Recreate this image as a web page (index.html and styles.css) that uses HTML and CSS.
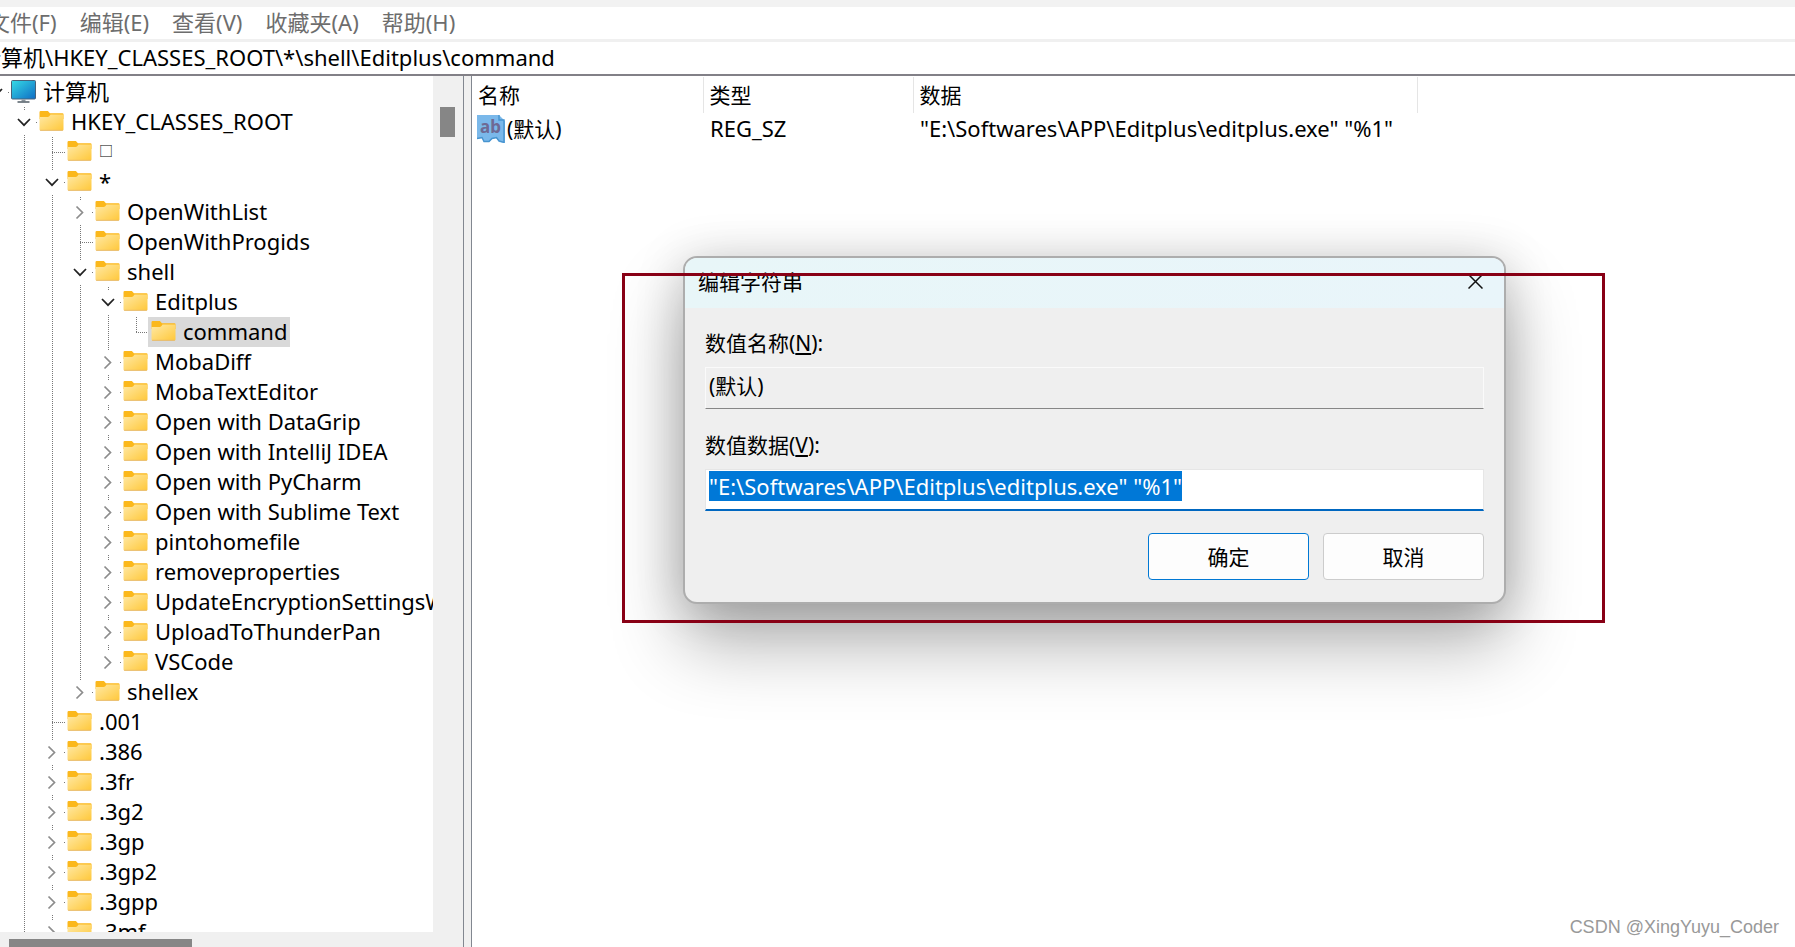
FILE: index.html
```html
<!DOCTYPE html>
<html lang="zh-CN">
<head>
    <meta charset="UTF-8">
    <title>注册表编辑器</title>
    <meta name="viewport" content="width=device-width, initial-scale=1.0">
    <link rel="stylesheet" href="styles.css">
</head>
<body>

    <!-- Shared icons -->
    <svg class="icon-defs" aria-hidden="true">
        <defs>
            <linearGradient id="folderFill" x1="0" y1="0" x2="1" y2="1">
                <stop offset="0" stop-color="#ffe9a6"/>
                <stop offset="1" stop-color="#ffc83a"/>
            </linearGradient>
            <linearGradient id="screenFill" x1="0" y1="0" x2="1" y2="1">
                <stop offset="0" stop-color="#35dbe6"/>
                <stop offset="1" stop-color="#0f6cc4"/>
            </linearGradient>
        </defs>
        <symbol id="folder" viewBox="0 0 24 20">
            <path d="M0 1.2Q0 0 1.2 0H8.4L10.4 2.2H23Q24 2.2 24 3.2V8H0Z" fill="#fbb81c"/>
            <path d="M0 6H8.2Q9 6 9.8 5.2L11 3.6H24V18.4Q24 19.4 23 19.4H1Q0 19.4 0 18.4Z" fill="url(#folderFill)"/>
            <path d="M.6 19.3H23.4" stroke="#e8b96a" stroke-width="1"/>
        </symbol>
        <symbol id="computer" viewBox="0 0 25 23">
            <rect x=".5" y=".5" width="24" height="18.5" rx="1" fill="url(#screenFill)" stroke="#48627a"/>
            <path d="M10.5 19.5H14.5V21.5H10.5Z" fill="#8c959d"/>
            <path d="M6.5 22H18.5" stroke="#5c6770" stroke-width="1.6"/>
        </symbol>
        <symbol id="open" viewBox="0 0 24 24">
            <path d="M6 9L12 15.2L18 9" fill="none" stroke="#222" stroke-width="1.7"/>
        </symbol>
        <symbol id="closed" viewBox="0 0 24 24">
            <path d="M8.500 6.500L14.500 12.500L8.500 18.500" fill="none" stroke="#8c8c8c" stroke-width="1.7"/>
        </symbol>
    </svg>

    <div class="window">
        <nav class="menu">
            <button type="button">文件(F)</button>
            <button type="button">编辑(E)</button>
            <button type="button">查看(V)</button>
            <button type="button">收藏夹(A)</button>
            <button type="button">帮助(H)</button>
        </nav>

        <div class="address">
            <input type="text" aria-label="地址" value="计算机\HKEY_CLASSES_ROOT\*\shell\Editplus\command">
        </div>

        <div class="panes">
            <!-- Key tree -->
            <div class="tree-pane">
                <div class="tree-view">
                    <ul class="tree" id="tree"></ul>
                </div>
                <div class="scroll-v"><div class="thumb"></div></div>
                <div class="scroll-h"><div class="thumb"></div></div>
            </div>

            <div class="splitter"></div>

            <!-- Values of the selected key -->
            <div class="value-pane">
                <table class="values">
                    <thead>
                        <tr>
                            <th class="col-name">名称</th>
                            <th class="col-type">类型</th>
                            <th class="col-data">数据</th>
                            <th></th>
                        </tr>
                    </thead>
                    <tbody>
                        <tr>
                            <td>
                                <div class="value-name">
                                    <svg width="28" height="28" viewBox="0 0 28 28" aria-hidden="true">
                                        <path d="M0 0H22L28 6V28L22 27L19 23L15 24L12 27H7L5 23L0 24Z" fill="#7ab8ea"/>
                                        <path d="M22 0V5H27V27.400L22 26L19.500 22.500L15 23.500L12 26.500H7L5 22.500L0 23.500" fill="none" stroke="#4794cf" stroke-width="1.400"/>
                                        <text x="3" y="18" class="ab">ab</text>
                                    </svg>
                                    (默认)
                                </div>
                            </td>
                            <td>REG_SZ</td>
                            <td>"E:\Softwares\APP\Editplus\editplus.exe" "%1"</td>
                            <td></td>
                        </tr>
                    </tbody>
                </table>
            </div>
        </div>
    </div>

    <!-- Edit string dialog -->
    <form class="dialog" role="dialog" aria-labelledby="dialogTitle">
        <div class="dialog-title">
            <span id="dialogTitle">编辑字符串</span>
            <button type="button" class="close" aria-label="关闭">
                <svg width="15" height="15" viewBox="0 0 15 15"><path d="M.5 .5L14.500 14.500M14.500 .5L.5 14.500" stroke="#111" stroke-width="1.500"/></svg>
            </button>
        </div>
        <div class="dialog-body">
            <label for="valueName">数值名称(<u>N</u>):</label>
            <input type="text" id="valueName" class="readonly" value="(默认)" readonly>
            <label for="valueData">数值数据(<u>V</u>):</label>
            <input type="text" id="valueData" class="data" spellcheck="false" value='"E:\Softwares\APP\Editplus\editplus.exe" "%1"'>
            <div class="dialog-buttons">
                <button type="button" class="default">确定</button>
                <button type="button">取消</button>
            </div>
        </div>
    </form>

    <div class="marker"></div>
    <div class="watermark">CSDN @XingYuyu_Coder</div>

    <script src="script.js"></script>
</body>
</html>
```

FILE: styles.css
```css
* {
    box-sizing: border-box;
}
body {
    margin: 0;
    position: relative;
    overflow: hidden;
    font-family: "Noto Sans", "Noto Sans CJK SC", sans-serif;
    font-size: 21px;
    line-height: 30px;
    color: #000000;
    background-color: #ffffff;
}
button, input {
    font: inherit;
    color: inherit;
    border: none;
    background: none;
    padding: 0;
    outline: none;
}
.icon-defs {
    position: absolute;
    width: 0;
    height: 0;
}
.window {
    display: flex;
    flex-direction: column;
    height: 100vh;
}

/* Menu and address bar */
.menu {
    display: flex;
    gap: 23px;
    height: 42px;
    margin-left: -12px;
    padding-bottom: 2px;
    border-top: 7px solid #f2f2f2;
    border-bottom: 3px solid #f0f0f0;
    font-size: 22px;
}
.menu button {
    color: #6d6d6d;
    white-space: nowrap;
}
.address {
    height: 34px;
    border-bottom: 2px solid #828087;
    font-size: 22px;
}
.address input {
    display: block;
    width: 100%;
    height: 30px;
    margin-left: -21px;
}
.panes {
    display: flex;
    flex: 1;
    min-height: 0;
}

/* Tree */
.tree-pane {
    display: grid;
    grid-template-columns: 1fr 30px;
    grid-template-rows: minmax(0, 1fr) 15px;
    width: 463px;
    background-color: #f0f0f0;
}
.tree-view {
    overflow: hidden;
    padding-top: 1px;
    background-color: #ffffff;
    font-size: 22px;
}
.tree, .tree ul {
    list-style: none;
    margin: 0;
    padding: 0;
}
.tree {
    margin-left: -28px;
}
.tree ul {
    padding-left: 28px;
}
.tree li {
    background: repeating-linear-gradient(#777 0 1px, transparent 1px 2px) 24px 0 / 1px 100% no-repeat;
}
.tree li.last {
    background-size: 1px 16px;
}
.row {
    display: flex;
    align-items: center;
    height: 30px;
    padding-left: 12px;
    background: repeating-linear-gradient(to right, #777 0 1px, transparent 1px 2px) 24px 15px / 14px 1px no-repeat;
}
.toggle {
    flex: none;
    width: 24px;
    height: 24px;
    background-color: #ffffff;
}
.toggle svg {
    display: block;
    width: 24px;
    height: 24px;
}
.leaf {
    padding-left: 36px;
}
.key {
    display: flex;
    align-items: center;
    gap: 7px;
    height: 30px;
    padding: 0 3px 2px;
    white-space: nowrap;
}
.key svg {
    flex: none;
    width: 25px;
    height: 20px;
}
.key svg.computer {
    height: 23px;
}
.key.small {
    font-size: 14px;
}
.selected {
    background-color: #d9d9d9;
}
.scroll-v .thumb {
    width: 15px;
    height: 30px;
    margin: 31px 0 0 7px;
    background-color: #868686;
}
.scroll-h {
    grid-column: 1 / -1;
    padding: 7px 0 0 9px;
}
.scroll-h .thumb {
    width: 183px;
    height: 8px;
    background-color: #868686;
}
.splitter {
    width: 9px;
    border: 1px solid #828790;
    border-width: 0 1px;
    background-color: #f0f0f0;
}

/* Value list */
.value-pane {
    flex: 1;
    min-width: 0;
    padding-top: 1px;
}
.values {
    width: 100%;
    table-layout: fixed;
    border-collapse: collapse;
}
.values th {
    height: 36px;
    padding: 0 6px;
    font-weight: normal;
    text-align: left;
    border-right: 1px solid #e5e5e5;
}
.values th:last-child {
    border-right: none;
}
.values td {
    height: 32px;
    padding: 0 7px 2px;
    font-size: 22px;
    white-space: nowrap;
}
.values td:first-child {
    padding: 0 5px;
}
.col-name {
    width: 231px;
}
.col-type {
    width: 210px;
}
.col-data {
    width: 504px;
}
.value-name {
    display: flex;
    align-items: center;
    gap: 2px;
    font-size: 21px;
}
.ab {
    font-size: 17px;
    font-weight: bold;
    fill: #6e6a94;
}

/* Dialog */
.dialog {
    position: absolute;
    left: 683px;
    top: 256px;
    width: 823px;
    overflow: hidden;
    border: 2px solid #adadad;
    border-radius: 14px;
    background-color: #efefef;
    box-shadow: 0 40px 72px rgba(0, 0, 0, 0.3), 0 4px 48px rgba(0, 0, 0, 0.18);
}
.dialog-title {
    display: flex;
    justify-content: space-between;
    align-items: center;
    height: 50px;
    padding: 0 21px 3px 13px;
    background: linear-gradient(to right, #e8f6f8, #e9f5fa);
}
.close svg {
    display: block;
}
.dialog-body {
    display: flex;
    flex-direction: column;
    padding: 20px 20px 22px;
}
.dialog-body label {
    line-height: 30px;
}
.dialog-body input {
    height: 42px;
    margin: 9px 0 21px;
    padding: 0 3px 7px;
    border: 1px solid #e6e6e6;
    background-color: #ffffff;
    line-height: 28px;
}
.dialog-body .readonly {
    border-color: #fafafa;
    border-bottom: 1px solid #868686;
    background-color: #efefef;
}
.dialog-body .data {
    border-bottom: 2px solid #0067c0;
    font-size: 22px;
}
.dialog-body input::selection {
    color: #ffffff;
    background-color: #0078d7;
}
.dialog-buttons {
    display: flex;
    justify-content: flex-end;
    gap: 14px;
    padding-top: 1px;
}
.dialog-buttons button {
    width: 161px;
    height: 47px;
    border: 1px solid #cccccc;
    border-radius: 4px;
    background-color: #fdfdfd;
}
.dialog-buttons .default {
    border-color: #0078d4;
}

/* Red frame drawn around the dialog */
.marker {
    position: absolute;
    left: 622px;
    top: 273px;
    width: 983px;
    height: 350px;
    border: 3px solid #880015;
    pointer-events: none;
}
.watermark {
    position: absolute;
    right: 16px;
    bottom: 5px;
    font-family: "Liberation Sans", sans-serif;
    font-size: 18px;
    color: #999999;
}
```

FILE: script.js
```js
// Registry keys shown in the tree; "more" means the list goes on below the view
const root = {
    name: '计算机', icon: 'computer', children: [
        { name: 'HKEY_CLASSES_ROOT', more: true, children: [
            { name: '□', style: 'small' },
            { name: '*', children: [
                { name: 'OpenWithList', closed: true },
                { name: 'OpenWithProgids' },
                { name: 'shell', children: [
                    { name: 'Editplus', children: [
                        { name: 'command', style: 'selected' }
                    ] },
                    { name: 'MobaDiff', closed: true },
                    { name: 'MobaTextEditor', closed: true },
                    { name: 'Open with DataGrip', closed: true },
                    { name: 'Open with IntelliJ IDEA', closed: true },
                    { name: 'Open with PyCharm', closed: true },
                    { name: 'Open with Sublime Text', closed: true },
                    { name: 'pintohomefile', closed: true },
                    { name: 'removeproperties', closed: true },
                    { name: 'UpdateEncryptionSettingsWork', closed: true },
                    { name: 'UploadToThunderPan', closed: true },
                    { name: 'VSCode', closed: true }
                ] },
                { name: 'shellex', closed: true }
            ] },
            { name: '.001' },
            { name: '.386', closed: true },
            { name: '.3fr', closed: true },
            { name: '.3g2', closed: true },
            { name: '.3gp', closed: true },
            { name: '.3gp2', closed: true },
            { name: '.3gpp', closed: true },
            { name: '.3mf', closed: true, more: true }
        ] }
    ]
};

function renderKey(key, isLast) {
    const icon = key.icon || 'folder';
    const hasToggle = key.children || key.closed;
    let html = `<li class="${isLast && !key.more ? 'last' : ''}">`;
    html += `<div class="row ${hasToggle ? '' : 'leaf'}">`;
    if (hasToggle) {
        html += `<button type="button" class="toggle" aria-label="${key.name}"><svg><use href="#${key.closed ? 'closed' : 'open'}"/></svg></button>`;
    }
    html += `<span class="key ${key.style || ''}"><svg class="${icon}"><use href="#${icon}"/></svg>${key.name}</span></div>`;
    if (key.children) {
        html += '<ul>' + key.children.map((child, i) => renderKey(child, i === key.children.length - 1)).join('') + '</ul>';
    }
    return html + '</li>';
}

document.getElementById('tree').innerHTML = renderKey(root, true);

// The value is selected as soon as the dialog opens
const valueData = document.getElementById('valueData');
valueData.focus();
valueData.select();
```
